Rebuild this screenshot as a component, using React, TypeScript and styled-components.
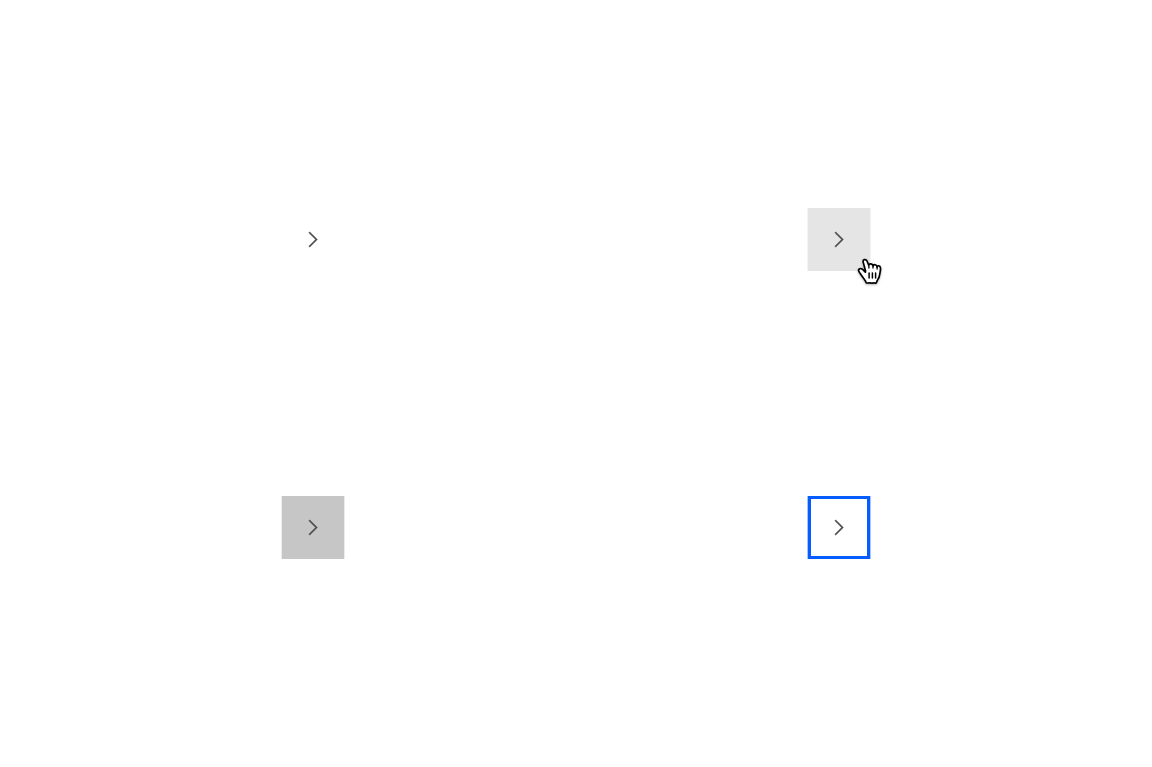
import React from "react";
import styled, { createGlobalStyle } from "styled-components";

const GlobalStyle = createGlobalStyle`
  body { margin: 0; background: #fff; }
`;

type State = "enabled" | "hover" | "active" | "focus";

const fills: Record<State, string> = {
  enabled: "#fff",
  hover: "#e5e5e5",
  active: "#c6c6c6",
  focus: "#fff",
};

const edges: Record<State, string> = {
  enabled: "#fff",
  hover: "#f3f3f3",
  active: "#ececec",
  focus: "#a5c6ff",
};

const Board = styled.main`
  box-sizing: border-box;
  min-height: 100vh;
  padding: 0 50px;
  display: grid;
  grid-template-columns: repeat(2, 1fr);
  grid-auto-rows: 288px;
  align-content: center;
`;

const Cell = styled.div`
  display: flex;
  align-items: center;
  justify-content: center;
`;

const Anchor = styled.div`
  position: relative;
  display: flex;
`;

const IconButton = styled.button<{ $state: State }>`
  width: 62px;
  height: 63px;
  padding: 0;
  display: flex;
  align-items: center;
  justify-content: center;
  box-sizing: border-box;
  border: 3px solid ${(p) => (p.$state === "focus" ? "#055cff" : fills[p.$state])};
  background: ${(p) => fills[p.$state]};
  box-shadow: -1px 0 ${(p) => edges[p.$state]}, 1px 0 ${(p) => edges[p.$state]};
  color: #4d4d4d;
  cursor: pointer;
`;

const Pointer = styled.svg`
  position: absolute;
  left: 49px;
  top: 50px;
  filter: drop-shadow(0 1px 1px rgba(0, 0, 0, 0.3));
  pointer-events: none;
`;

const Chevron = () => (
  <svg width="25" height="25" viewBox="0.4 0 16 16" fill="currentColor" stroke="currentColor" strokeWidth="0.12" aria-hidden="true">
    <path d="M11 8 6 13 5.3 12.3 9.6 8 5.3 3.7 6 3z" />
  </svg>
);

const Hand = () => (
  <Pointer width="26" height="28" viewBox="0 0 26 28" aria-hidden="true">
    <path
      d="M8.4 14.2C7.3 13.1 6.2 11.8 5 11C3 9.7 .7 11.4 2 13.6C3.2 15.6 4.6 17.2 5.8 19.2C7 21.4 8.9 22.6 9 24.4C9.1 25.2 9.8 25 10.4 25C12 24.8 13.8 24.6 15.2 25.2C16.4 24.4 17.4 25.2 18.8 25.2C19.9 25.2 19.3 23.6 20.4 22.2C21.6 20.6 22.3 19.6 22.5 17.4C22.7 15.4 23.8 12.6 23.5 10C23.3 7.4 20.5 7.1 20.1 9C19.8 6.6 16.8 5.7 16 7.9C15.4 5.6 12.3 5.2 11.7 7.2L10 3C8.9 .6 5.5 1.4 6.2 4.1L8.6 13.2"
      fill="#fff"
      stroke="#000"
      strokeWidth="1.7"
      strokeLinecap="round"
      strokeLinejoin="round"
    />
    <path d="M11.9 8v2M16 8v2M20.1 9v2" stroke="#000" strokeWidth="1.3" strokeLinecap="round" />
    <path d="M12.1 15v5M15.4 15v5M18.6 15v5" stroke="#000" strokeWidth="1.5" strokeLinecap="round" />
  </Pointer>
);

const states: State[] = ["enabled", "hover", "active", "focus"];

export default function App() {
  return (
    <>
      <GlobalStyle />
      <Board>
        {states.map((state) => (
          <Cell key={state}>
            <Anchor>
              <IconButton type="button" $state={state} aria-label={`Next, ${state}`}>
                <Chevron />
              </IconButton>
              {state === "hover" && <Hand />}
            </Anchor>
          </Cell>
        ))}
      </Board>
    </>
  );
}
